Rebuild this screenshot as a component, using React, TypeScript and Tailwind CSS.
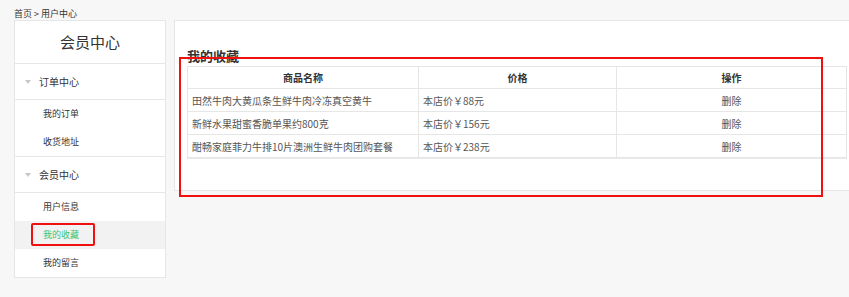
type Favorite = {
  name: string;
  price: string;
};

const favorites: Favorite[] = [
  { name: '田然牛肉大黄瓜条生鲜牛肉冷冻真空黄牛', price: '本店价￥88元' },
  { name: '新鲜水果甜蜜香脆单果约800克', price: '本店价￥156元' },
  { name: '酣畅家庭菲力牛排10片澳洲生鲜牛肉团购套餐', price: '本店价￥238元' },
];

const font = { fontFamily: '"Microsoft YaHei", "Noto Sans CJK SC", sans-serif' };

const GroupHeader = ({ title }: { title: string }) => (
  <div className="h-[36px] border-b border-[#e6e6e6] flex items-center pl-[10px] text-[10px] text-[#333]">
    <span className="w-0 h-0 border-x-[3px] border-x-transparent border-t-[4px] border-t-[#c8c8c8] mr-[8px]" />
    {title}
  </div>
);

const SideItem = ({ label, active }: { label: string; active?: boolean }) => (
  <div
    className={
      'relative h-[28px] flex items-center pl-[28px] text-[9px] ' +
      (active ? 'bg-[#f2f2f2] text-[#3dc46f]' : 'text-[#333]')
    }
  >
    {label}
    {active && (
      <div className="absolute left-[16px] top-[2px] w-[64px] h-[23px] border-2 border-[#f01010] rounded-[2px]" />
    )}
  </div>
);

const Sidebar = () => (
  <div className="w-[152px] shrink-0 bg-white border border-[#e6e6e6]">
    <div className="h-[43px] border-b border-[#e6e6e6] flex items-center justify-center text-[15px] text-[#333]">
      会员中心
    </div>
    <GroupHeader title="订单中心" />
    <SideItem label="我的订单" />
    <div className="border-b border-[#e6e6e6]">
      <SideItem label="收货地址" />
    </div>
    <GroupHeader title="会员中心" />
    <SideItem label="用户信息" />
    <SideItem label="我的收藏" active />
    <SideItem label="我的留言" />
  </div>
);

const FavoriteTable = () => (
  <table className="w-[660px] border-collapse border border-[#e6e6e6] text-[10px] shadow-[0_1px_0_#e9e9e9]">
    <thead>
      <tr className="h-[22px]">
        <th className="w-[231px] border border-[#e6e6e6] font-bold text-[#333] text-center">商品名称</th>
        <th className="w-[198px] border border-[#e6e6e6] font-bold text-[#333] text-center">价格</th>
        <th className="border border-[#e6e6e6] font-bold text-[#333] text-center">操作</th>
      </tr>
    </thead>
    <tbody>
      {favorites.map((item) => (
        <tr key={item.name} className="h-[23px] text-[#555]">
          <td className="border border-[#e6e6e6] pl-[4px]">{item.name}</td>
          <td className="border border-[#e6e6e6] pl-[4px]">{item.price}</td>
          <td className="border border-[#e6e6e6] text-center">删除</td>
        </tr>
      ))}
    </tbody>
  </table>
);

const App = () => {
  return (
    <div className="min-h-[297px] w-full overflow-hidden bg-[#f7f7f7]" style={font}>
      <div className="w-[860px] pl-[14px]">
        <div className="h-[20px] pt-[8px] text-[9px] leading-[12px] text-[#333]">首页 &gt; 用户中心</div>
        <div className="flex gap-[8px] items-start">
          <Sidebar />
          <div className="relative flex-1 bg-white border border-[#e6e6e6] pl-[12px] pt-[27px] pb-[32px]">
            <h2 className="text-[13px] leading-[16px] font-bold text-[#333] mb-[2px]">我的收藏</h2>
            <FavoriteTable />
            <div className="absolute left-[4px] top-[36px] w-[644px] h-[140px] border-2 border-[#f01010]" />
          </div>
        </div>
      </div>
    </div>
  );
};

export default App;
